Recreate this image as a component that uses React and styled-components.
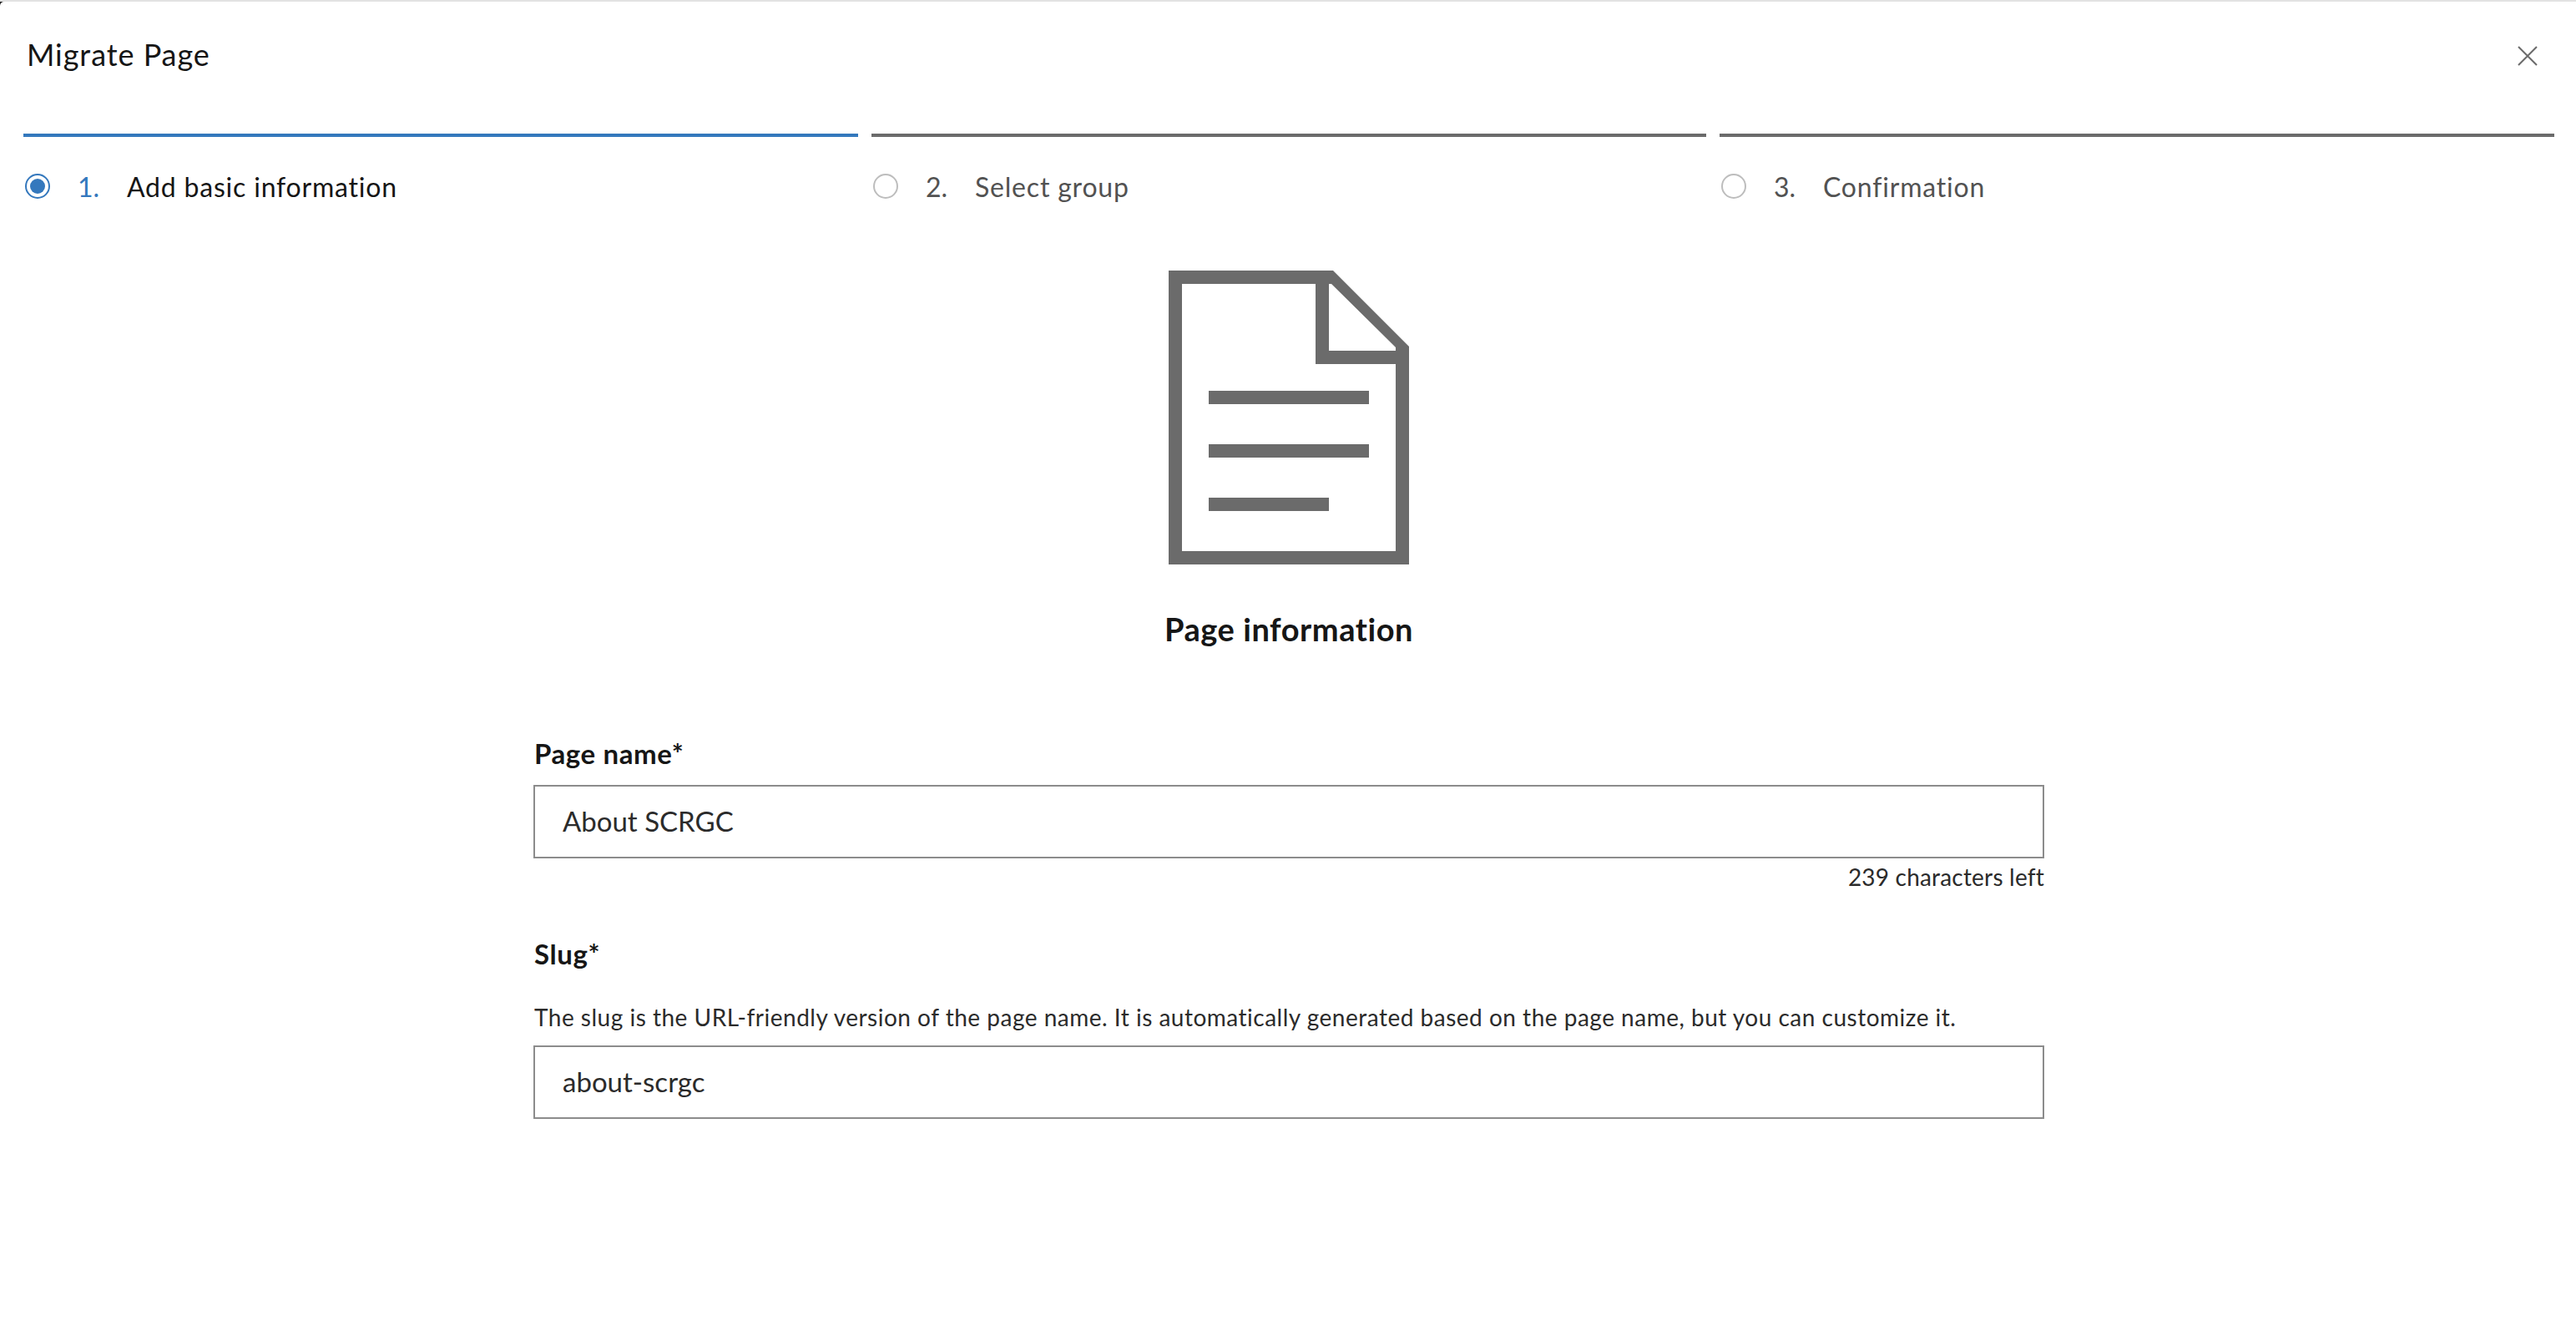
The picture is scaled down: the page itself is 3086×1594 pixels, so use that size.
import React from "react";
import styled, { createGlobalStyle } from "styled-components";

const GlobalStyle = createGlobalStyle`
  html, body {
    margin: 0;
    padding: 0;
    background: #fff;
  }
  * {
    box-sizing: border-box;
  }
`;

const Page = styled.div`
  width: 3086px;
  height: 1594px;
  border-top: 2px solid #e2e2e2;
  background: #222;
`;

const Modal = styled.div`
  height: 100%;
  background: #fff;
  border-top-left-radius: 5px;
  font-family: Lato, "Open Sans", sans-serif;
  color: #161616;
  display: flex;
  flex-direction: column;
`;

const Header = styled.div`
  display: flex;
  align-items: center;
  justify-content: space-between;
  height: 126px;
  padding: 0 46px 0 32px;
  margin-bottom: 32px;
`;

const Title = styled.h1`
  margin: 0;
  font-size: 36px;
  font-weight: 400;
  letter-spacing: 0.95px;
`;

const CloseButton = styled.button`
  width: 24px;
  height: 24px;
  margin-top: 3px;
  padding: 0;
  border: 0;
  background: none;
  display: flex;
`;

const Steps = styled.div`
  display: grid;
  grid-template-columns: repeat(3, 1000px);
  gap: 16px;
  padding-left: 28px;
`;

const Step = styled.div`
  border-top: 4px solid ${(p) => (p.$active ? "#3478bd" : "#6b6b6b")};
  padding: 38px 0 0 2px;
  display: flex;
  align-items: center;
  height: 84px;
  font-size: 32px;
  color: ${(p) => (p.$active ? "#161616" : "#525252")};
`;

const Radio = styled.span`
  width: 30px;
  height: 30px;
  border-radius: 50%;
  border: 2px solid ${(p) => (p.$active ? "#3478bd" : "#bdbdbd")};
  display: flex;
  align-items: center;
  justify-content: center;
  flex: none;
  &::after {
    content: "";
    display: ${(p) => (p.$active ? "block" : "none")};
    width: 18px;
    height: 18px;
    border-radius: 50%;
    background: #3478bd;
  }
`;

const StepNumber = styled.span`
  width: 59px;
  margin-left: 33px;
  color: ${(p) => (p.$active ? "#3478bd" : "#525252")};
`;

const StepLabel = styled.span`
  letter-spacing: 0.8px;
`;

const Hero = styled.div`
  display: flex;
  flex-direction: column;
  align-items: center;
  margin-top: 80px;
  padding-left: 2px;
`;

const Heading = styled.h2`
  margin: 54px 0 0;
  font-size: 38px;
  line-height: 46px;
  font-weight: 700;
  letter-spacing: 0.55px;
`;

const Form = styled.div`
  width: 1810px;
  margin: 106px 0 0 639px;
  display: flex;
  flex-direction: column;
`;

const Label = styled.label`
  display: block;
  font-size: 33px;
  line-height: 40px;
  font-weight: 700;
  letter-spacing: 0.6px;
  margin-bottom: 18px;
  margin-left: 1px;
`;

const Input = styled.input`
  display: block;
  width: 100%;
  height: 88px;
  padding: 0 33px 2px;
  border: 2px solid #8c8c8c;
  border-radius: 0;
  background: #fff;
  outline: none;
  font-family: inherit;
  font-size: 33px;
  color: #2b2b2b;
`;

const Counter = styled.div`
  text-align: right;
  font-size: 28px;
  line-height: 36px;
  letter-spacing: 0.2px;
  margin-top: 4px;
  margin-bottom: 54px;
  color: #2b2b2b;
`;

const Help = styled.p`
  margin: 20px 0 16px 1px;
  font-size: 28px;
  line-height: 36px;
  letter-spacing: 0.5px;
  color: #2b2b2b;
`;

function CloseIcon() {
  return (
    <svg width="24" height="24" viewBox="0 0 24 24" fill="none" stroke="#6b6b6b" strokeWidth="2">
      <path d="M1 1L23 23M23 1L1 23" />
    </svg>
  );
}

function PageIcon() {
  return (
    <svg width="288" height="352" viewBox="0 0 288 352">
      <path
        fill="#6b6b6b"
        fillRule="evenodd"
        d="M0 0H197L288 91V352H0ZM16 16V336H272V112H176V16ZM192 16V96H272V92L195 16ZM48 144H240V160H48ZM48 208H240V224H48ZM48 272H192V288H48Z"
      />
    </svg>
  );
}

const steps = ["Add basic information", "Select group", "Confirmation"];

export default function App() {
  return (
    <>
      <GlobalStyle />
      <Page>
        <Modal>
          <Header>
            <Title>Migrate Page</Title>
            <CloseButton>
              <CloseIcon />
            </CloseButton>
          </Header>
          <Steps>
            {steps.map((label, i) => (
              <Step key={label} $active={i === 0}>
                <Radio $active={i === 0} />
                <StepNumber $active={i === 0}>{i + 1}.</StepNumber>
                <StepLabel>{label}</StepLabel>
              </Step>
            ))}
          </Steps>
          <Hero>
            <PageIcon />
            <Heading>Page information</Heading>
          </Hero>
          <Form>
            <Label>Page name*</Label>
            <Input defaultValue="About SCRGC" />
            <Counter>239 characters left</Counter>
            <Label>Slug*</Label>
            <Help>
              The slug is the URL-friendly version of the page name. It is automatically generated based on the page name, but you can customize it.
            </Help>
            <Input defaultValue="about-scrgc" />
          </Form>
        </Modal>
      </Page>
    </>
  );
}
